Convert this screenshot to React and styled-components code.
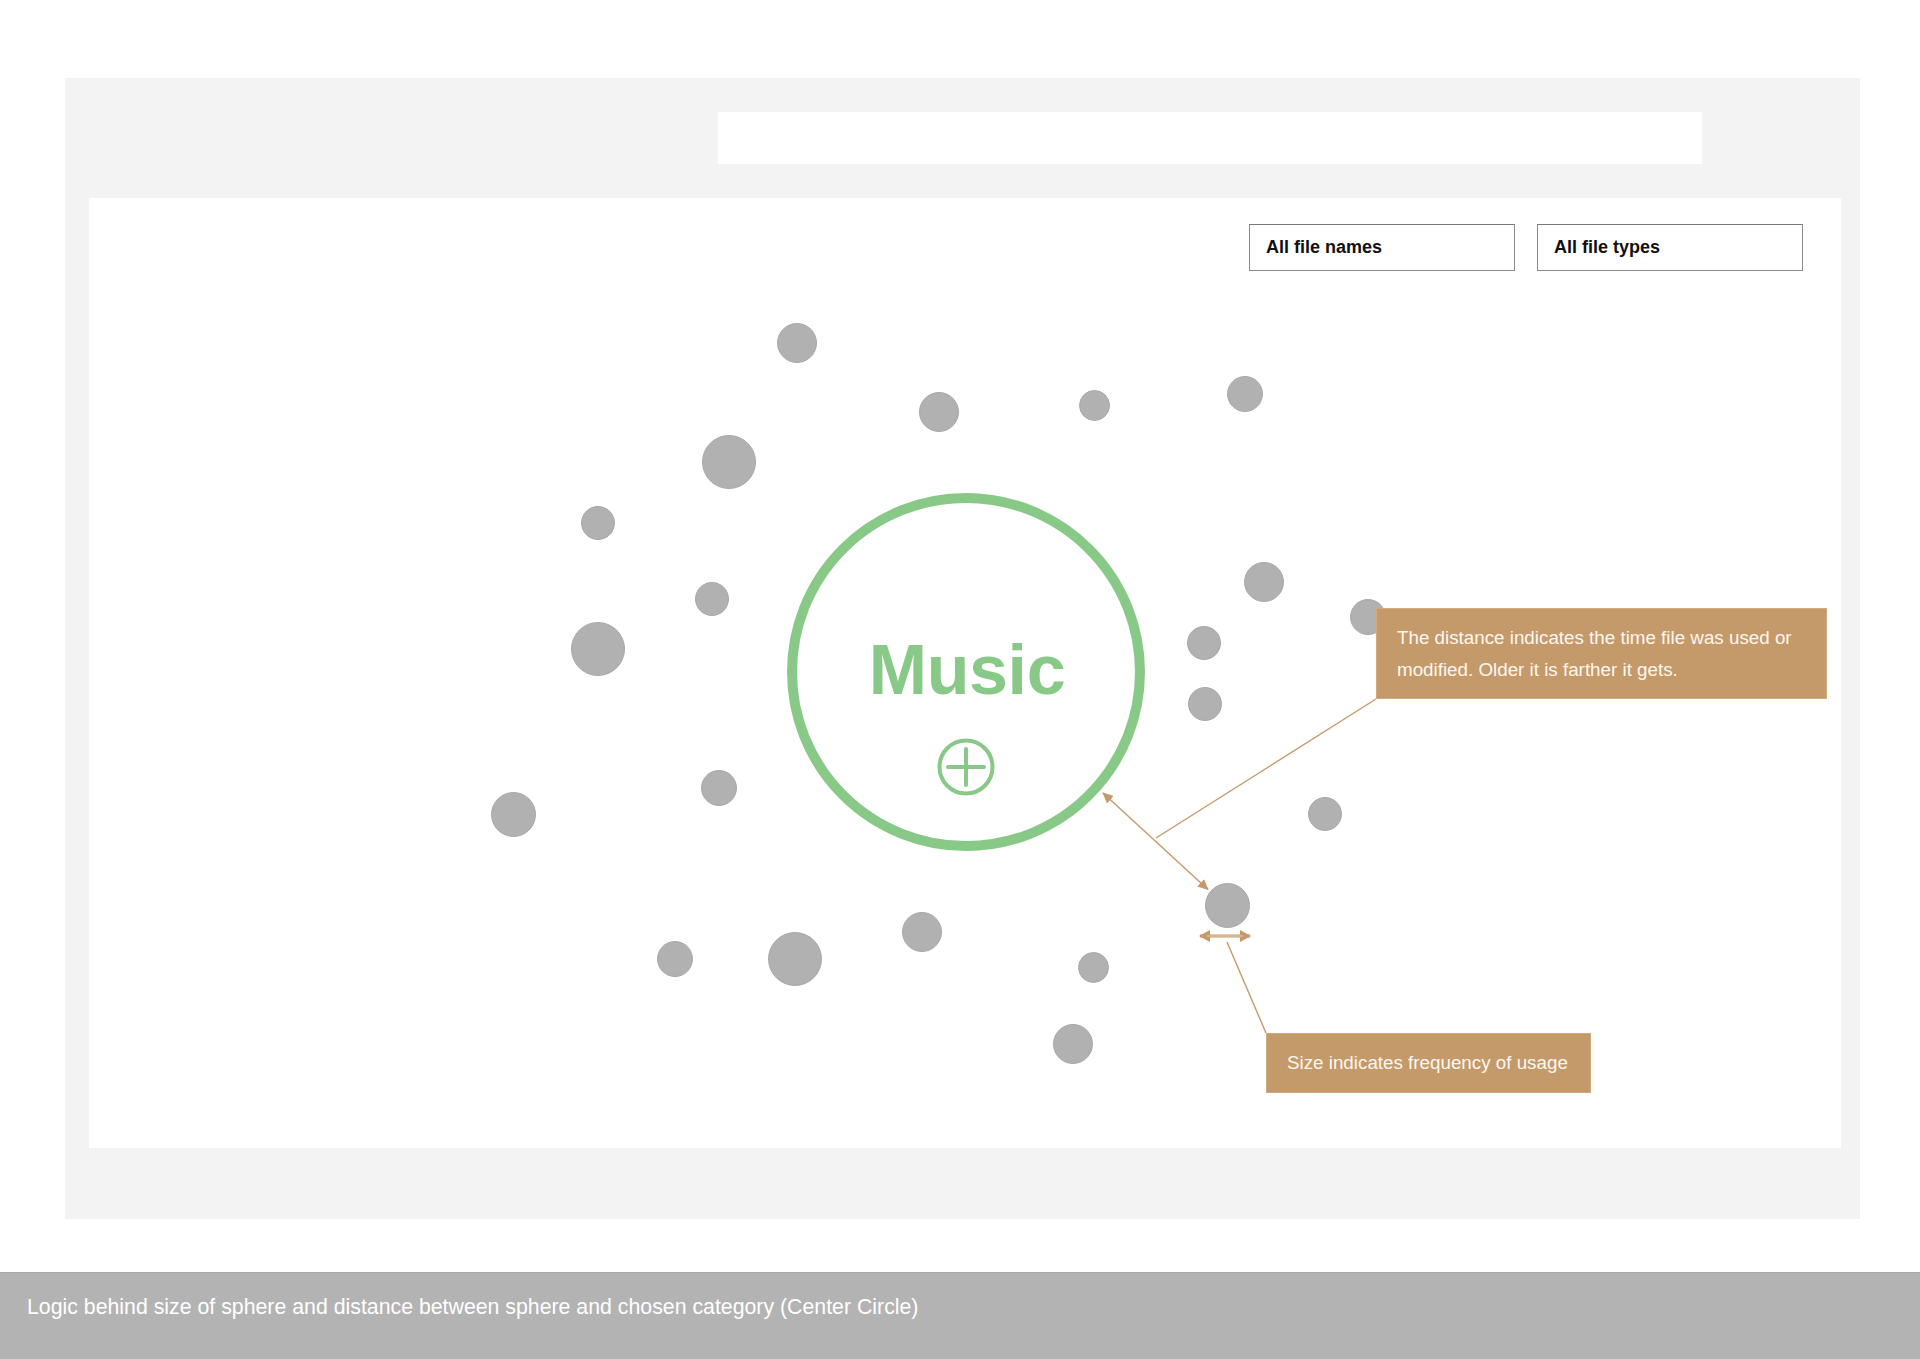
import React from 'react';
import styled, { createGlobalStyle } from 'styled-components';

const GlobalStyle = createGlobalStyle`
  html, body {
    margin: 0;
    padding: 0;
    background: #ffffff;
    font-family: "Liberation Sans", Arial, Helvetica, sans-serif;
  }
`;

const ACCENT = '#c49a6b';
const GREEN = '#89c987';

const Page = styled.div`
  width: 1920px;
  height: 1359px;
  padding-top: 78px;
  box-sizing: border-box;
  display: flex;
  flex-direction: column;
`;

const Panel = styled.div`
  margin: 0 60px 0 65px;
  background: #f3f3f3;
  padding: 34px 19px 71px 24px;
  display: flex;
  flex-direction: column;
  gap: 34px;
`;

const SearchBar = styled.div`
  margin-left: 629px;
  width: 984px;
  height: 52px;
  background: #ffffff;
`;

const Canvas = styled.div`
  position: relative;
  height: 950px;
  background: #ffffff;
  overflow: hidden;
`;

const Toolbar = styled.div`
  display: flex;
  justify-content: flex-end;
  gap: 22px;
  padding: 26px 38px 0 0;
`;

const FilterButton = styled.button`
  width: 266px;
  height: 47px;
  box-sizing: border-box;
  background: #ffffff;
  border: 1px solid #8c8c8c;
  border-top-color: #7a7a7a;
  padding: 0 0 0 16px;
  text-align: left;
  font-family: "Liberation Sans", Arial, sans-serif;
  font-weight: 700;
  font-size: 18px;
  color: #111111;
  cursor: pointer;
`;

const Sphere = styled.div`
  position: absolute;
  left: ${p => p.$x - p.$d / 2}px;
  top: ${p => p.$y - p.$d / 2}px;
  width: ${p => p.$d}px;
  height: ${p => p.$d}px;
  box-sizing: border-box;
  border-radius: 50%;
  background: #b1b1b1;
  border: 1px solid #a9a9a9;
`;

const CategoryRing = styled.div`
  position: absolute;
  left: 698px;
  top: 295px;
  width: 358px;
  height: 358px;
  box-sizing: border-box;
  border: 10px solid ${GREEN};
  border-radius: 50%;
  display: flex;
  flex-direction: column;
  align-items: center;
  padding-top: 132px;
`;

const CategoryLabel = styled.div`
  font-family: "Liberation Sans", Arial, sans-serif;
  font-weight: 700;
  font-size: 70px;
  line-height: 70px;
  letter-spacing: -0.4px;
  color: ${GREEN};
  margin-left: 2px;
`;

const AddButton = styled.svg`
  margin-top: 33px;
  display: block;
`;

const Connectors = styled.svg`
  position: absolute;
  left: 0;
  top: 0;
  pointer-events: none;
`;

const Note = styled.div`
  position: absolute;
  left: ${p => p.$x}px;
  top: ${p => p.$y}px;
  width: ${p => p.$w}px;
  height: ${p => p.$h}px;
  box-sizing: border-box;
  background: ${ACCENT};
  border: 1px solid #d0aa80;
  padding: ${p => p.$pad};
  display: flex;
  align-items: ${p => (p.$center ? 'center' : 'flex-start')};
  font-family: "Liberation Sans", Arial, sans-serif;
  font-size: 18.8px;
  line-height: 32px;
  color: #fbf6ef;
`;

const Footer = styled.div`
  margin-top: 53px;
  height: 87px;
  box-sizing: border-box;
  background: #b3b3b3;
  border-top: 1px solid #a8a8a8;
  padding: 24px 0 0 27px;
  font-size: 21.3px;
  line-height: 20px;
  color: #ffffff;
`;

const spheres = [
  { x: 708, y: 145, d: 40 },
  { x: 850, y: 214, d: 40 },
  { x: 1005, y: 207, d: 31 },
  { x: 1156, y: 196, d: 36 },
  { x: 640, y: 264, d: 54 },
  { x: 509, y: 325, d: 34 },
  { x: 623, y: 401, d: 34 },
  { x: 509, y: 451, d: 54 },
  { x: 1175, y: 384, d: 40 },
  { x: 1279, y: 419, d: 36 },
  { x: 1115, y: 445, d: 34 },
  { x: 1116, y: 506, d: 34 },
  { x: 630, y: 590, d: 36 },
  { x: 424, y: 616, d: 45 },
  { x: 1236, y: 616, d: 34 },
  { x: 1138, y: 707, d: 45 },
  { x: 833, y: 734, d: 40 },
  { x: 586, y: 761, d: 36 },
  { x: 706, y: 761, d: 54 },
  { x: 1004, y: 769, d: 31 },
  { x: 984, y: 846, d: 40 },
];

const App = () => {
  return (
    <>
      <GlobalStyle />
      <Page>
        <Panel>
          <SearchBar />
          <Canvas>
            <Toolbar>
              <FilterButton>All file names</FilterButton>
              <FilterButton>All file types</FilterButton>
            </Toolbar>

            {spheres.map((s, i) => (
              <Sphere key={i} $x={s.x} $y={s.y} $d={s.d} />
            ))}

            <CategoryRing>
              <CategoryLabel>Music</CategoryLabel>
              <AddButton width="58" height="58" viewBox="0 0 58 58">
                <circle cx="29" cy="29" r="26.5" fill="none" stroke={GREEN} strokeWidth="4" />
                <path d="M11 29 H47 M29 11 V47" stroke={GREEN} strokeWidth="4" strokeLinecap="round" />
              </AddButton>
            </CategoryRing>

            <Connectors width="1752" height="950" viewBox="0 0 1752 950">
              <defs>
                <marker id="head" viewBox="0 0 11 10" refX="10" refY="5" markerWidth="11" markerHeight="10"
                  markerUnits="userSpaceOnUse" orient="auto-start-reverse">
                  <path d="M0 0 L11 5 L0 10 Z" fill={ACCENT} />
                </marker>
                <marker id="headWide" viewBox="0 0 11 12" refX="10" refY="6" markerWidth="11" markerHeight="12"
                  markerUnits="userSpaceOnUse" orient="auto-start-reverse">
                  <path d="M0 0 L11 6 L0 12 Z" fill={ACCENT} />
                </marker>
              </defs>
              <line x1="1287" y1="501" x2="1067" y2="640" stroke={ACCENT} strokeWidth="1.4" />
              <line x1="1014" y1="595" x2="1119" y2="691.5" stroke={ACCENT} strokeWidth="1.4"
                markerStart="url(#head)" markerEnd="url(#head)" />
              <line x1="1111" y1="738" x2="1161" y2="738" stroke={ACCENT} strokeWidth="3"
                markerStart="url(#headWide)" markerEnd="url(#headWide)" />
              <line x1="1118" y1="738" x2="1154" y2="738" stroke="#e6d2bb" strokeWidth="1" />
              <line x1="1138" y1="744" x2="1177" y2="835" stroke={ACCENT} strokeWidth="1.4" />
            </Connectors>

            <Note $x={1287} $y={410} $w={451} $h={91} $pad="13px 20px 0 20px">
              The distance indicates the time file was used or modified. Older it is farther it gets.
            </Note>
            <Note $x={1177} $y={835} $w={325} $h={60} $pad="0 20px" $center>
              Size indicates frequency of usage
            </Note>
          </Canvas>
        </Panel>
        <Footer>
          Logic behind size of sphere and distance between sphere and chosen category (Center Circle)
        </Footer>
      </Page>
    </>
  );
};

export default App;
